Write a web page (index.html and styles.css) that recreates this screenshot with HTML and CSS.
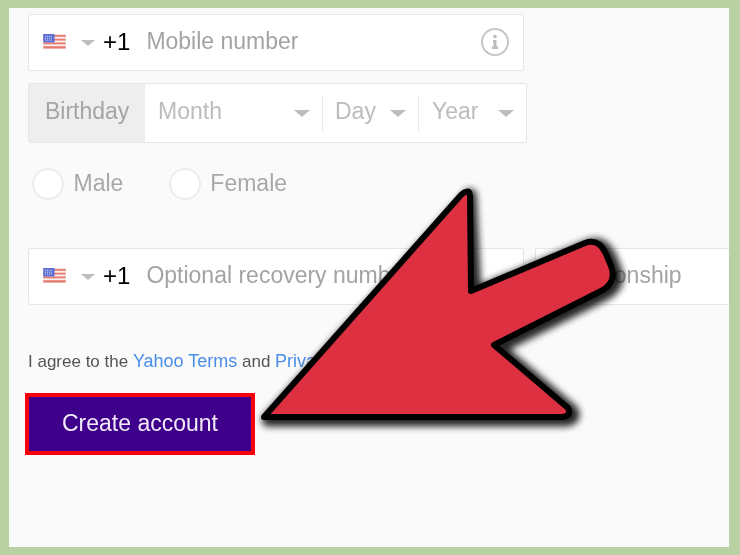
FILE: index.html
```html
<!DOCTYPE html>
<html>

<head>
  <link rel="stylesheet" href="styles.css">
</head>

<body>
  <div class="sheet">
    <div class="field phone-field">
      <svg class="flag" viewBox="0 0 24 16">
        <rect width="24" height="16" fill="#f4f0f0"/>
        <rect y="1" width="24" height="2" fill="#ea7a70"/>
        <rect y="5" width="24" height="2" fill="#ea7a70"/>
        <rect y="9" width="24" height="2" fill="#ea7a70"/>
        <rect y="13" width="24" height="2.5" fill="#ea7a70"/>
        <rect width="12" height="9" fill="#5d6fd6"/>
        <path d="M2 2.5h8M2 4.5h8M2 6.5h8" stroke="#dfe4fa" stroke-width="1" stroke-dasharray="1 1"/>
      </svg>
      <span class="caret phone-caret"></span>
      <span class="code">+1</span>
      <span class="hint">Mobile number</span>
      <svg class="info" viewBox="0 0 28 28">
        <circle cx="14" cy="14" r="13" fill="none" stroke="#c6c6c6" stroke-width="2"/>
        <circle cx="14" cy="8.5" r="1.8" fill="#bcbcbc"/>
        <path d="M12 12h3.500v6.500h1.500v2.500h-6v-2.500h1.500v-4h-.5z" fill="#bcbcbc"/>
      </svg>
    </div>

    <div class="birthday">
      <div class="birthday-label">Birthday</div>
      <div class="select month"><span class="select-text">Month</span><span class="caret"></span></div>
      <div class="select day"><span class="select-text">Day</span><span class="caret"></span></div>
      <div class="select year"><span class="select-text">Year</span><span class="caret"></span></div>
    </div>

    <div class="gender">
      <span class="radio"></span><span class="radio-label male">Male</span>
      <span class="radio"></span><span class="radio-label">Female</span>
    </div>

    <div class="recovery">
      <div class="field phone-field">
        <svg class="flag" viewBox="0 0 24 16">
          <rect width="24" height="16" fill="#f4f0f0"/>
          <rect y="1" width="24" height="2" fill="#ea7a70"/>
          <rect y="5" width="24" height="2" fill="#ea7a70"/>
          <rect y="9" width="24" height="2" fill="#ea7a70"/>
          <rect y="13" width="24" height="2.500" fill="#ea7a70"/>
          <rect width="12" height="9" fill="#5d6fd6"/>
          <path d="M2 2.500h8M2 4.500h8M2 6.500h8" stroke="#dfe4fa" stroke-width="1" stroke-dasharray="1 1"/>
        </svg>
        <span class="caret phone-caret"></span>
        <span class="code">+1</span>
        <span class="hint">Optional recovery number</span>
      </div>
      <div class="field relationship"><span class="hint">Relationship</span></div>
    </div>

    <p class="terms">I agree to the <a href="#">Yahoo Terms</a> and <a href="#">Privacy Policy</a></p>

    <button class="create">Create account</button>
  </div>

  <svg class="arrow" viewBox="0 0 740 555">
    <defs>
      <filter id="glow" x="-10%" y="-10%" width="120%" height="120%">
        <feGaussianBlur stdDeviation="3.500"/>
      </filter>
    </defs>
    <path class="arrow-shadow" filter="url(#glow)" d="M466 192 L471 291 L585 243 C597 239 602 246 606 254 L611 266 C616 279 609 287 601 291 L494 345 L568 408 Q572 416 562 417 L264 417 Z"/>
    <path class="arrow-body" d="M466 192 Q470 190 470 196 L471 291 L585 243 C597 239 602 246 606 254 L611 266 C616 279 609 287 601 291 L494 345 L568 408 Q572 416 562 417 L264 417 L461 195 Q464 192 466 192 Z"/>
  </svg>
</body>

</html>
```

FILE: styles.css
```css
html, body {
  margin: 0;
  padding: 0;
}

body {
  width: 740px;
  height: 555px;
  overflow: hidden;
  background-color: #b9d0a3;
  font-family: 'Liberation Sans', Arial, sans-serif;
}

.sheet {
  box-sizing: border-box;
  width: 720px;
  height: 539px;
  margin: 8px 0 0 9px;
  padding: 6px 0 0 19px;
  background-color: #fafafa;
  overflow: hidden;
  filter: blur(0.4px);
}

.field {
  box-sizing: border-box;
  display: flex;
  align-items: center;
  height: 57px;
  background-color: #fff;
  border: 1px solid #e6e6e6;
  border-radius: 2px;
  font-size: 23px;
}

.phone-field {
  width: 496px;
  padding-left: 14px;
}

.flag {
  width: 23px;
  height: 15px;
  flex: none;
  margin-bottom: 2px;
}

.caret {
  display: inline-block;
  width: 0;
  height: 0;
  flex: none;
  border-left: 8px solid transparent;
  border-right: 8px solid transparent;
  border-top: 7px solid #bdbdbd;
}

.phone-caret {
  margin-left: 15px;
  border-left-width: 7px;
  border-right-width: 7px;
  border-top-width: 6px;
}

.code {
  margin-left: 8px;
  margin-bottom: 2px;
  color: #000;
  font-size: 24px;
}

.hint {
  margin-left: 16px;
  margin-bottom: 2px;
  color: #a3a3a3;
  white-space: nowrap;
}

.info {
  width: 28px;
  height: 28px;
  margin-left: auto;
  margin-right: 14px;
  margin-bottom: 2px;
}

.birthday {
  box-sizing: border-box;
  display: flex;
  align-items: center;
  width: 499px;
  height: 60px;
  margin-top: 12px;
  background-color: #fff;
  border: 1px solid #e6e6e6;
  border-radius: 2px;
  font-size: 23px;
  color: #bcbcbc;
}

.birthday-label {
  box-sizing: border-box;
  align-self: stretch;
  display: flex;
  align-items: center;
  width: 116px;
  padding: 0 0 3px 16px;
  background-color: #eee;
  color: #a5a5a5;
}

.select {
  box-sizing: border-box;
  display: flex;
  align-items: center;
  justify-content: space-between;
  height: 36px;
}

.select-text {
  margin-bottom: 3px;
}

.month {
  width: 178px;
  padding: 0 12px 0 13px;
  border-right: 1px solid #e6e6e6;
}

.day {
  width: 96px;
  padding: 0 12px 0 12px;
  border-right: 1px solid #e6e6e6;
}

.year {
  width: 107px;
  padding: 0 12px 0 13px;
}

.gender {
  display: flex;
  align-items: center;
  height: 34px;
  margin-top: 24px;
  margin-left: 4px;
  font-size: 23px;
  color: #a8a8a8;
}

.radio {
  box-sizing: border-box;
  width: 32px;
  height: 32px;
  background-color: #fff;
  border: 2px solid #ececec;
  border-radius: 50%;
}

.radio-label {
  margin-left: 9.5px;
  margin-bottom: 2px;
}

.male {
  margin-right: 45.500px;
}

.recovery {
  display: flex;
  gap: 11px;
  width: 740px;
  margin-top: 47px;
}

.recovery .phone-field {
  flex: none;
}

.relationship {
  flex: none;
  width: 194px;
  border-right: 0;
  border-radius: 0;
}

.relationship .hint {
  margin-left: 19px;
}

.terms {
  margin: 46px 0 0 0;
  font-size: 17px;
  line-height: 20px;
  color: #555;
}

.terms a {
  color: #4a8ee8;
  font-size: 18px;
  text-decoration: none;
}

.create {
  box-sizing: border-box;
  display: block;
  width: 230px;
  height: 62px;
  margin: 21px 0 0 -3px;
  padding: 0 0 2px 0;
  background-color: #3e008b;
  border: 4px solid #fa0008;
  color: #f2eaf8;
  font-family: 'Liberation Sans', Arial, sans-serif;
  font-size: 23px;
  cursor: pointer;
}

.arrow {
  position: absolute;
  left: 0;
  top: 0;
  width: 740px;
  height: 555px;
}

.arrow-shadow {
  fill: #000;
  stroke: #000;
  stroke-width: 13;
  stroke-linejoin: round;
  opacity: 0.85;
  transform: translate(4px, 3px);
}

.arrow-body {
  fill: #dd3040;
  stroke: #000;
  stroke-width: 6;
  stroke-linejoin: round;
}
```
